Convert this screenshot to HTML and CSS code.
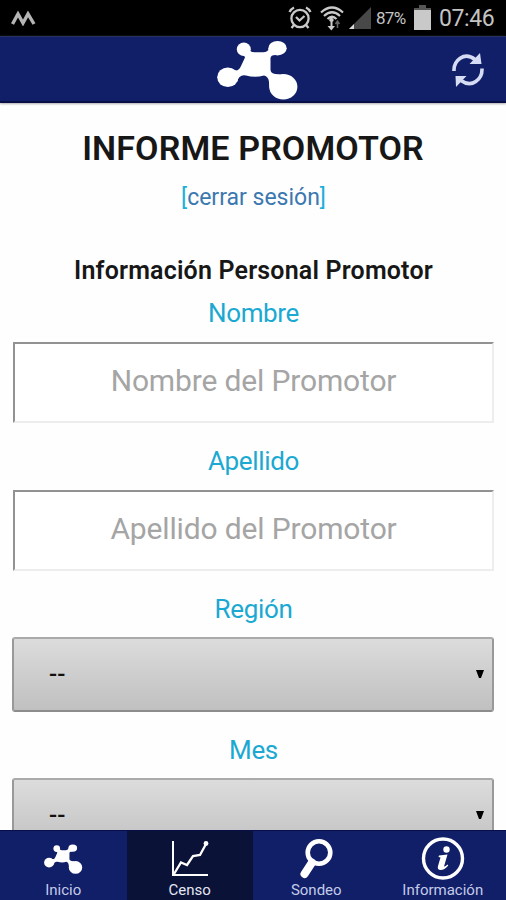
FILE: index.html
```html
<!DOCTYPE html>
<html lang="es">
<head>
<meta charset="utf-8">
<title>Informe Promotor</title>
<link rel="stylesheet" href="styles.css">
</head>
<body>
<svg class="defs" aria-hidden="true">
  <symbol id="molecule" viewBox="0 0 82 60" preserveAspectRatio="none">
    <ellipse cx="26.8" cy="9.2" rx="7" ry="6.8"/>
    <ellipse cx="60.5" cy="8.2" rx="9.2" ry="7.2"/>
    <ellipse cx="10.8" cy="37.200" rx="10.6" ry="9.8"/>
    <ellipse cx="66.300" cy="46.800" rx="14.1" ry="12.7"/>
    <path d="M32.500 9Q33 12.500 38 12.300H46Q51 12.300 52 8L60 15Q53 14.500 53.500 19V30Q54 34.500 62 34.300L70 40L55 53Q51.500 47 52 42Q51.500 36.500 47 35.500Q38 38 29 35.500Q22 34 20 42L15 29Q21 33 24 26L28 17.500Q28 16 25 14Z"/>
  </symbol>
</svg>
<div class="app">
  <div class="status">
    <svg class="status-mark" viewBox="0 0 26 16"><path d="M2.500 14L8 4L13 13L18 4L24 14" /></svg>
    <div class="status-right">
      <svg class="alarm" viewBox="0 0 24 24"><g fill="none" stroke="#c9c9c9" stroke-width="2.300"><circle cx="12" cy="12.500" r="8.600"/><path d="M8 11L11.500 14.500L16.500 10M1.500 6Q3 3 6 1.500M18 1.500Q21 3 22.500 6M6 19L3.500 22M18 19L20.500 22"/></g></svg>
      <svg class="wifi" viewBox="0 0 24 26"><g fill="none" stroke="#c9c9c9" stroke-width="2.200"><path d="M1 7.500Q12-2.500 23 7.500M4 11Q12 3.500 20 11M7.500 14Q12 9.500 16.500 14"/></g><path fill="#c9c9c9" d="M12 13a2 2 0 0 1 .5 3.800V21h2.500L11.300 25.500L7.500 21h3v-4.200A2 2 0 0 1 12 13"/><path d="M17.500 23v-6M15.500 19l2-3l2 3" fill="none" stroke="#666" stroke-width="1.500"/></svg>
      <svg class="signal" viewBox="0 0 24 24"><path fill="#484848" d="M23 1V23H1Z"/><path fill="#d8d8d8" d="M6 18V23H1Z"/></svg>
      <span class="percent">87%</span>
      <svg class="battery" viewBox="0 0 19 26"><path fill="#555" d="M6 0h7v3h5v3H1V3h5Z"/><path fill="#c9c9c9" d="M1 5h17v20H1Z"/></svg>
      <span class="clock">07:46</span>
    </div>
  </div>
  <header class="header">
    <svg class="logo"><use href="#molecule"/></svg>
    <button class="refresh" aria-label="Actualizar"><svg viewBox="0 0 34 36"><g fill="none" stroke="#d5dcf3" stroke-width="3.600"><path d="M3 19C2.500 9 13-1 24 7.500"/><path d="M31 16.500C31.500 27 21 36.500 10 28.500"/></g><path fill="#d5dcf3" d="M29 1L30.500 12H18.500ZM5 35L4.500 24H15.500Z"/></svg></button>
  </header>
  <main class="content">
    <h1>INFORME PROMOTOR</h1>
    <p class="logout">[<a>cerrar sesión</a>]</p>
    <h2>Información Personal Promotor</h2>
    <form>
      <label for="nombre">Nombre</label>
      <input id="nombre" placeholder="Nombre del Promotor">
      <label for="apellido">Apellido</label>
      <input id="apellido" placeholder="Apellido del Promotor">
      <label class="for-select">Región</label>
      <div class="select"><span>--</span><svg viewBox="0 0 8 8"><path d="M0 0H8L5 8H3Z"/></svg></div>
      <label class="for-select">Mes</label>
      <div class="select"><span>--</span><svg viewBox="0 0 8 8"><path d="M0 0H8L5 8H3Z"/></svg></div>
    </form>
  </main>
  <nav class="tabs">
    <a class="tab"><svg class="tab-icon mini"><use href="#molecule"/></svg><span>Inicio</span></a>
    <a class="tab active"><svg class="tab-icon" viewBox="0 0 44 44"><g fill="none" stroke="#fff"><path stroke-width="2" d="M5 4V38H40"/><path stroke-width="2.300" d="M6 37L13 25.500L19 28L25 19L32 18L38 7"/></g><circle cx="38" cy="6.500" r="2.400" fill="#fff"/></svg><span>Censo</span></a>
    <a class="tab"><svg class="tab-icon" viewBox="0 0 44 44"><g fill="none" stroke="#fff"><circle cx="25" cy="15.500" r="11.300" stroke-width="4.600"/><path d="M18 25.500L10.500 37" stroke-width="8" stroke-linecap="round"/></g></svg><span>Sondeo</span></a>
    <a class="tab"><svg class="tab-icon" viewBox="0 0 44 44"><circle cx="22" cy="21.500" r="19.500" fill="none" stroke="#fff" stroke-width="3.400"/><g fill="#fff"><circle cx="25.500" cy="12.500" r="3.200"/><path d="M18 18.500L26.500 17.500L23 29.500Q24 30 26.500 27.500L27.300 28.500Q23 33.500 19 33Q16 32.500 17 29L19.500 20.500L17.500 20Z"/></g></svg><span>Información</span></a>
  </nav>
</div>
</body>
</html>
```
FILE: styles.css
```css
* { box-sizing: border-box; }
body { margin: 0; font-family: Roboto, "Liberation Sans", sans-serif; background: #fefefe; }
.defs { position: absolute; width: 0; height: 0; }
.app { height: 900px; display: flex; flex-direction: column; overflow: hidden; }
.status { height: 36px; flex: none; background: #000; display: flex; justify-content: space-between; padding: 0 11px 0 10px; }
.status-mark { width: 26px; height: 16px; margin-top: 10px; fill: none; stroke: #b5b5b5; stroke-width: 3.4; }
.status-right { display: flex; align-items: center; color: #c4c4c4; }
.alarm { width: 24px; height: 24px; margin-right: 8px; }
.wifi { width: 24px; height: 26px; margin-right: 4px; }
.signal { width: 24px; height: 24px; margin-right: 4px; }
.percent { font-size: 17px; width: 37px; letter-spacing: -0.7px; }
.battery { width: 19px; height: 26px; margin-right: 7px; }
.clock { font-size: 23px; width: 56px; letter-spacing: -0.4px; white-space: nowrap; }
.header { height: 67px; flex: none; background: #111e68; border-top: 1px solid #2a3263; border-bottom: 2px solid #080f48; box-shadow: 0 1px 2px #aaa; display: grid; grid-template-columns: 1fr 82px 1fr; z-index: 1; }
.logo { grid-column: 2; width: 82px; height: 60px; margin: 3px 0 0 5px; fill: #fff; }
.refresh { justify-self: end; align-self: center; border: 0; padding: 0; margin: 1px 21px 0 0; background: none; }
.refresh svg { display: block; width: 34px; height: 36px; }
.content { flex: 1; min-height: 0; overflow: hidden; padding: 0 12px; text-align: center; }
h1 { margin: 24px 0 0; height: 42px; font-size: 34px; line-height: 42px; font-weight: 600; letter-spacing: 0.13px; color: #171717; white-space: nowrap; }
.logout { margin: 14px 0 0 1px; height: 30px; line-height: 30px; font-size: 23px; color: #1bb0d8; }
.logout a { color: #3b78b0; }
h2 { margin: 41px 0 0 1px; height: 34px; line-height: 34px; font-size: 25px; font-weight: 600; letter-spacing: 0.18px; color: #171717; white-space: nowrap; }
label { display: block; height: 34px; line-height: 34px; margin: 8px 0 12px 1px; font-size: 26px; letter-spacing: -0.35px; color: #1ba9d2; }
label.for-select { margin-bottom: 11px; }
input { display: block; width: 481px; height: 81px; margin: 0 0 21px 1px; border: 2px solid; border-color: #929292 #ededed #ededed #929292; background: #fff; font: 30px Roboto, sans-serif; letter-spacing: -0.15px; text-align: center; padding: 0 0 4px; }
input::placeholder { color: #a5a5a5; opacity: 1; }
.select { height: 75px; margin-bottom: 21px; border: 2px solid; border-color: #aaa #999 #8c8c8c #999; border-radius: 3px; background: linear-gradient(#dcdcdc, #c0c0c0); display: flex; align-items: center; justify-content: space-between; padding: 0 8px 2px 35px; font-size: 24px; font-weight: 500; color: #111; }
.select span { line-height: 20px; }
.select svg { width: 8px; height: 8px; }
.tabs { height: 70px; flex: none; background: #111e68; border-top: 1px solid #080f48; display: grid; grid-template-columns: repeat(4, 1fr); }
.tab { display: flex; flex-direction: column; align-items: center; padding-top: 6px; color: #c3cbe8; font-size: 15px; }
.tab.active { background: #0a1237; color: #e4e7f3; }
.tab-icon { width: 44px; height: 44px; flex: none; }
.tab-icon.mini { width: 39px; height: 30px; margin: 7px 0; fill: #fff; }
.tab span { line-height: 18px; white-space: nowrap; }
```
